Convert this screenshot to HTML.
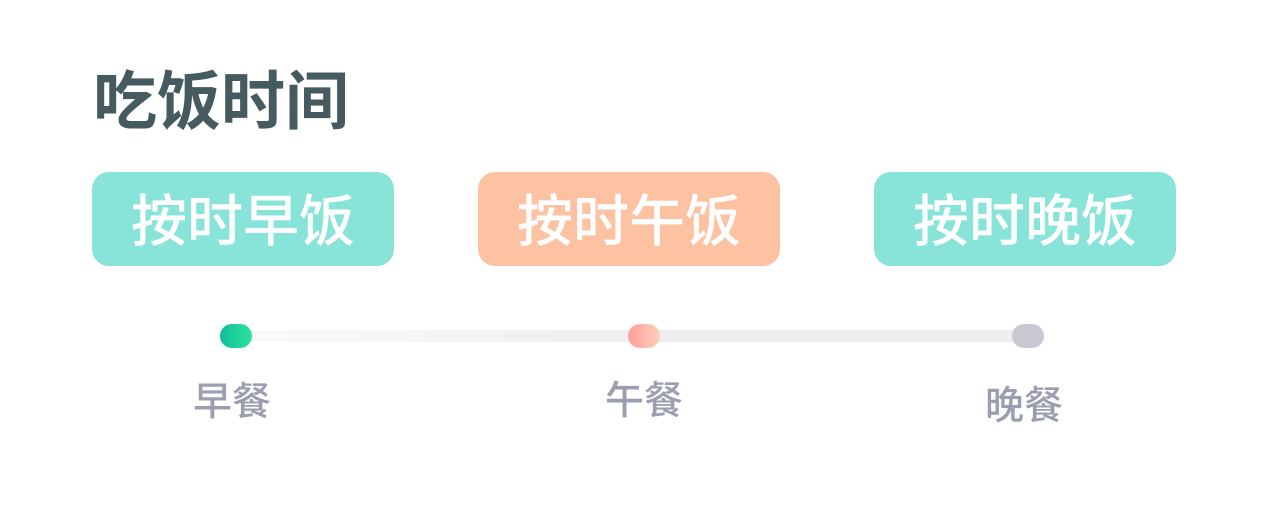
<!DOCTYPE html>
<html><head><meta charset="utf-8"><style>
body{margin:0;width:1272px;height:532px;background:#fff;position:relative;overflow:hidden;font-family:"Liberation Sans","Noto Sans CJK SC",sans-serif}
.t{position:absolute;left:93px;top:62px;font-size:64px;font-weight:700;color:#455b5f;line-height:80px;white-space:nowrap}
.b{position:absolute;top:172px;width:302px;height:94px;border-radius:17px;color:#fff;font-size:56px;font-weight:500;text-align:center;line-height:100px;white-space:nowrap}
.track{position:absolute;left:236px;top:330px;width:794px;height:12px;background:linear-gradient(90deg,#fafafa,#efefef 50%,#eeeeee)}
.d{position:absolute;top:324px;width:32px;height:24px;border-radius:12px}
.l{position:absolute;font-size:39px;color:#9b9db0;font-weight:500;line-height:40px;white-space:nowrap}
</style></head><body>
<div class="t">吃饭时间</div>
<div class="b" style="left:92px;background:#88e4d8">按时早饭</div>
<div class="b" style="left:478px;background:#fdc2a2">按时午饭</div>
<div class="b" style="left:874px;background:#88e4d8">按时晚饭</div>
<div class="track"></div>
<div class="d" style="left:220px;background:linear-gradient(90deg,#0fbf97,#2ee2a0)"></div>
<div class="d" style="left:628px;background:linear-gradient(90deg,#ff9e9a,#ffcfbf)"></div>
<div class="d" style="left:1012px;background:#c8c8d2"></div>
<div class="l" style="left:193px;top:383px">早餐</div>
<div class="l" style="left:605px;top:382px">午餐</div>
<div class="l" style="left:985px;top:387px">晚餐</div>
</body></html>
